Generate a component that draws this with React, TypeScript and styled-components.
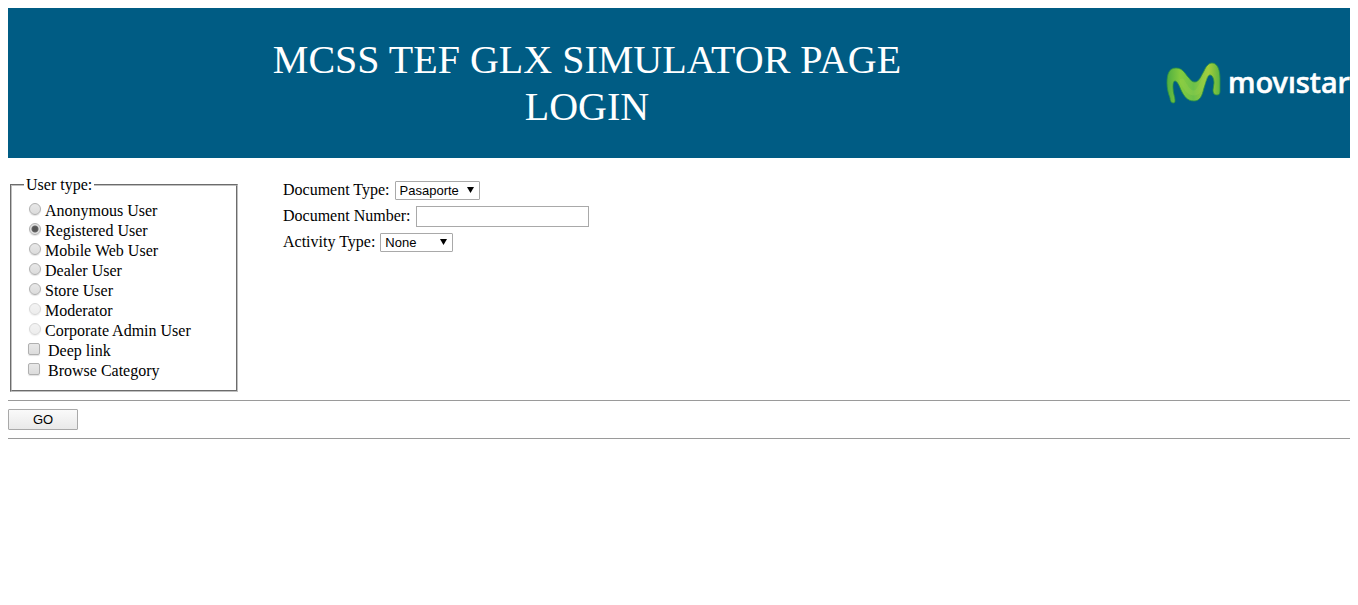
import React from "react";
import styled, { createGlobalStyle } from "styled-components";

const GlobalStyle = createGlobalStyle`
  * { box-sizing: border-box; }
  body {
    margin: 8px;
    background: #fff;
    color: #000;
    font: 16px/20px "Liberation Serif", "Times New Roman", serif;
  }
`;

const Banner = styled.header`
  display: flex;
  align-items: center;
  min-height: 150px;
  background: #005c84;
  color: #fff;
  overflow: hidden;
`;

const Title = styled.h1`
  flex: 1;
  margin: 0;
  font-size: 40px;
  line-height: 47px;
  font-weight: 400;
  text-align: center;
`;

const Logo = styled.svg`
  flex: none;
  width: 184px;
  height: 48px;
  overflow: hidden;
`;

const Wordmark = styled.text`
  font: 500 29px "Noto Sans", sans-serif;
  fill: #fff;
  stroke: #fff;
  stroke-width: 0.6px;
`;

const Options = styled.div`
  display: flex;
  align-items: flex-start;
  gap: 45px;
  padding: 17px 2px 0;
`;

const UserTypes = styled.fieldset`
  width: 228px;
  margin: 0;
  padding: 6px 16px 9px 12px;
  border: 2px groove #c0c0c0;
`;

const Legend = styled.legend`
  padding: 0 2px;
`;

const Choice = styled.label<{ $wide?: boolean }>`
  display: flex;
  align-items: flex-start;
  gap: ${(p) => (p.$wide ? 8 : 4)}px;
  padding-left: ${(p) => (p.$wide ? 4 : 5)}px;
`;

const Mark = styled.input`
  appearance: none;
  flex: none;
  width: 12px;
  height: 12px;
  margin: 2px 0 0;
  border: 1px solid #b0b0b0;
  border-radius: ${(p) => (p.type === "radio" ? "50%" : "2px")};
  background: linear-gradient(#e8e8e8, #dcdcdc);
  box-shadow: 0 1px 1px rgba(0, 0, 0, 0.12);
  &:checked {
    background: radial-gradient(circle, #555 0 2px, #666 3px, #e3e3e3 4px);
  }
  &:disabled {
    opacity: 0.5;
  }
`;

const Fields = styled.div`
  display: flex;
  flex-direction: column;
  padding-top: 2px;
`;

const Field = styled.div`
  display: flex;
  align-items: center;
  gap: 5px;
  height: 26px;
`;

const SelectBox = styled.span<{ $width: number }>`
  display: grid;
  align-items: center;
  width: ${(p) => p.$width}px;
`;

const Select = styled.select`
  grid-area: 1 / 1;
  appearance: none;
  width: 100%;
  height: 19px;
  margin: 0;
  padding: 0 4px;
  border: 1px solid #a9a9a9;
  border-radius: 1px;
  background: #fff;
  color: #000;
  font: 13px "Liberation Sans", Arial, sans-serif;
`;

const Arrow = styled.svg`
  grid-area: 1 / 1;
  justify-self: end;
  width: 7px;
  height: 6px;
  margin-right: 6px;
  pointer-events: none;
`;

const TextInput = styled.input`
  width: 173px;
  height: 21px;
  padding: 1px 2px;
  border: 1px solid #a9a9a9;
  background: #fff;
  font: 13px "Liberation Sans", Arial, sans-serif;
`;

const Rule = styled.hr`
  height: 1px;
  margin: 8px 0;
  border: 0;
  background: #9a9a9a;
`;

const GoButton = styled.button`
  display: block;
  width: 70px;
  height: 21px;
  padding: 0;
  border: 1px solid #a9a9a9;
  border-radius: 1px;
  background: linear-gradient(#fafafa, #e9e9e9);
  color: #000;
  font: 13px "Liberation Sans", Arial, sans-serif;
`;

const users = [
  { name: "Anonymous User" },
  { name: "Registered User" },
  { name: "Mobile Web User" },
  { name: "Dealer User" },
  { name: "Store User" },
  { name: "Moderator", disabled: true },
  { name: "Corporate Admin User", disabled: true },
];

const M_SHAPE =
  "M4 35C2 30 1 25 1 20C1 11 3 5 10 5C17 5 19 11 23 15C25 18 27 19 29 19C33 19 35 13 38 8C40 3 43 0 46 0C52 0 54 8 54 16V28C54 31 53 32 51 32C48 32 47 30 47 27L48 20C48 15 46 12 44 12C41 12 40 19 38 25C36 33 34 38 28 38C21 38 18 33 15 27C13 22 11 18 9 18C7 18 7 22 7 25C7 30 9 34 9 37C9 39 9 40 7 40C5 40 4 37 4 35Z";

function MovistarLogo() {
  return (
    <Logo role="img" aria-label="movistar">
      <defs>
        <linearGradient id="green" x1="0" y1="0" x2="1" y2="0">
          <stop offset="0" stopColor="#4fae42" />
          <stop offset="0.25" stopColor="#84cb3e" />
          <stop offset="0.5" stopColor="#6cc04a" />
          <stop offset="0.78" stopColor="#a5ce39" />
          <stop offset="1" stopColor="#5cb543" />
        </linearGradient>
      </defs>
      <g transform="translate(0 4)">
        <path d={M_SHAPE} fill="url(#green)" stroke="#2c9244" strokeWidth="0.8" />
        <path
          d="M16 18C20 25 23 30 28 30C34 30 37 18 42 8"
          fill="none"
          stroke="#98d04a"
          strokeWidth="5"
          strokeLinecap="round"
          opacity="0.35"
        />
      </g>
      <Wordmark x="62" y="34">movıstar</Wordmark>
    </Logo>
  );
}

function DropDown({ id, width, options }: { id: string; width: number; options: string[] }) {
  return (
    <SelectBox $width={width}>
      <Select id={id}>
        {options.map((o) => (
          <option key={o}>{o}</option>
        ))}
      </Select>
      <Arrow viewBox="0 0 7 6" aria-hidden="true">
        <path d="M0 0H7L3.5 6Z" />
      </Arrow>
    </SelectBox>
  );
}

export default function App() {
  return (
    <>
      <GlobalStyle />
      <Banner>
        <Title>
          MCSS TEF GLX SIMULATOR PAGE
          <br />
          LOGIN
        </Title>
        <MovistarLogo />
      </Banner>
      <form onSubmit={(e) => e.preventDefault()}>
        <Options>
          <UserTypes>
            <Legend>User type:</Legend>
            {users.map((u) => (
              <Choice key={u.name}>
                <Mark
                  type="radio"
                  name="user"
                  value={u.name}
                  disabled={u.disabled}
                  defaultChecked={u.name === "Registered User"}
                />
                {u.name}
              </Choice>
            ))}
            {["Deep link", "Browse Category"].map((name) => (
              <Choice key={name} $wide>
                <Mark type="checkbox" name={name} />
                {name}
              </Choice>
            ))}
          </UserTypes>
          <Fields>
            <Field>
              <label htmlFor="docType">Document Type:</label>
              <DropDown id="docType" width={85} options={["Pasaporte"]} />
            </Field>
            <Field>
              <label htmlFor="docNumber">Document Number:</label>
              <TextInput id="docNumber" type="text" />
            </Field>
            <Field>
              <label htmlFor="activity">Activity Type:</label>
              <DropDown id="activity" width={73} options={["None"]} />
            </Field>
          </Fields>
        </Options>
        <Rule />
        <GoButton type="submit">GO</GoButton>
        <Rule />
      </form>
    </>
  );
}
